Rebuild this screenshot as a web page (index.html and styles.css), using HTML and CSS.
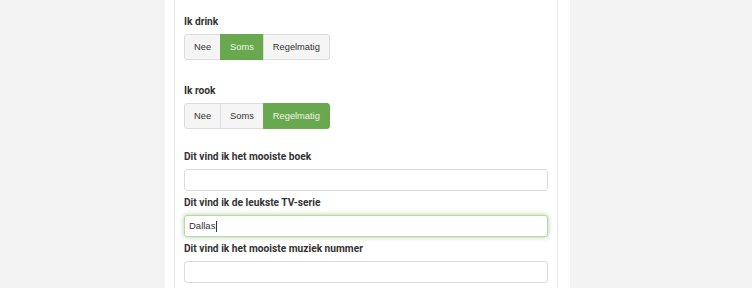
FILE: index.html
```html
<!DOCTYPE html>
<html>
<head>
<meta charset="utf-8">
<link rel="stylesheet" href="styles.css">
</head>
<body>
<div class="column">
  <div class="card">
    <div class="field field-choice">
      <div class="label">Ik drink</div>
      <div class="btn-group">
        <span class="btn">Nee</span><span class="btn active">Soms</span><span class="btn">Regelmatig</span>
      </div>
    </div>
    <div class="field field-choice">
      <div class="label">Ik rook</div>
      <div class="btn-group">
        <span class="btn">Nee</span><span class="btn">Soms</span><span class="btn active">Regelmatig</span>
      </div>
    </div>
    <div class="field">
      <div class="label">Dit vind ik het mooiste boek</div>
      <div class="input"></div>
    </div>
    <div class="field">
      <div class="label">Dit vind ik de leukste TV-serie</div>
      <div class="input focused">Dallas<span class="caret"></span></div>
    </div>
    <div class="field">
      <div class="label">Dit vind ik het mooiste muziek nummer</div>
      <div class="input"></div>
    </div>
  </div>
</div>
</body>
</html>
```

FILE: styles.css
```css
html, body {
  margin: 0;
  padding: 0;
  height: 288px;
  overflow: hidden;
  background: #f3f3f3;
}
body {
  padding-left: 165px;
}
.column {
  width: 405px;
  height: 288px;
  background: #ffffff;
  padding-left: 9px;
  box-sizing: border-box;
}
.card {
  width: 384px;
  height: 288px;
  box-sizing: border-box;
  border-left: 1px solid #e9e9e9;
  border-right: 1px solid #e9e9e9;
  padding: 15px 9px 0 9px;
  display: flex;
  flex-direction: column;
}
.field {
  display: flex;
  flex-direction: column;
  gap: 5px;
  margin-bottom: 5px;
}
.field-choice {
  margin-bottom: 24px;
}
.field-choice + .field-choice {
  margin-bottom: 21px;
}
.label {
  font-family: Roboto, "DejaVu Sans", sans-serif;
  font-weight: bold;
  font-size: 10.2px;
  line-height: 14px;
  color: #333333;
}
.btn-group {
  display: flex;
}
.btn {
  font-family: "Liberation Sans", Arial, sans-serif;
  font-size: 9.3px;
  color: #333333;
  height: 26px;
  line-height: 24px;
  padding: 0 9px;
  box-sizing: border-box;
  background: #f5f5f5;
  border: 1px solid #dcdcdc;
  margin-left: -1px;
}
.btn:first-child {
  margin-left: 0;
  border-radius: 3px 0 0 3px;
}
.btn:last-child {
  border-radius: 0 3px 3px 0;
}
.btn.active {
  background: #6aa84f;
  border-color: #6aa84f;
  color: #eef5e8;
}
.input {
  width: 364px;
  height: 22px;
  box-sizing: border-box;
  border: 1px solid #dddddd;
  border-radius: 3px;
  background: #ffffff;
  font-family: "Liberation Sans", Arial, sans-serif;
  font-size: 9.5px;
  color: #333333;
  line-height: 20px;
  padding: 0 4px;
  display: flex;
  align-items: center;
}
.input.focused {
  border-color: #bcd6ab;
  box-shadow: 0 0 5px rgba(106, 168, 79, 0.55);
}
.caret {
  display: inline-block;
  width: 1px;
  height: 11px;
  background: #333333;
  margin-left: 1px;
}
```
